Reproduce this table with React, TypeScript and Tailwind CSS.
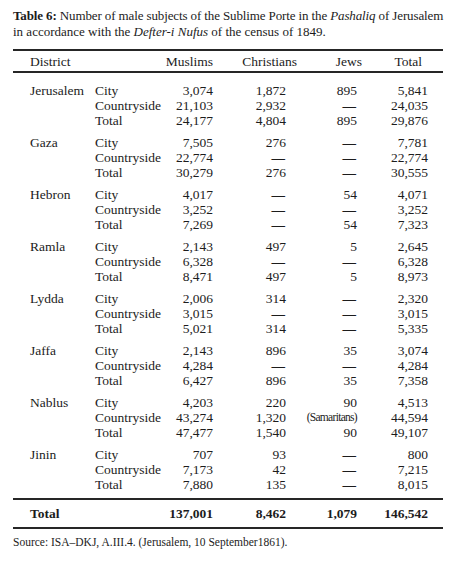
const groups = [
  {
    district: 'Jerusalem',
    rows: [
      ['City', '3,074', '1,872', '895', '5,841'],
      ['Countryside', '21,103', '2,932', '—', '24,035'],
      ['Total', '24,177', '4,804', '895', '29,876'],
    ],
  },
  {
    district: 'Gaza',
    rows: [
      ['City', '7,505', '276', '—', '7,781'],
      ['Countryside', '22,774', '—', '—', '22,774'],
      ['Total', '30,279', '276', '—', '30,555'],
    ],
  },
  {
    district: 'Hebron',
    rows: [
      ['City', '4,017', '—', '54', '4,071'],
      ['Countryside', '3,252', '—', '—', '3,252'],
      ['Total', '7,269', '—', '54', '7,323'],
    ],
  },
  {
    district: 'Ramla',
    rows: [
      ['City', '2,143', '497', '5', '2,645'],
      ['Countryside', '6,328', '—', '—', '6,328'],
      ['Total', '8,471', '497', '5', '8,973'],
    ],
  },
  {
    district: 'Lydda',
    rows: [
      ['City', '2,006', '314', '—', '2,320'],
      ['Countryside', '3,015', '—', '—', '3,015'],
      ['Total', '5,021', '314', '—', '5,335'],
    ],
  },
  {
    district: 'Jaffa',
    rows: [
      ['City', '2,143', '896', '35', '3,074'],
      ['Countryside', '4,284', '—', '—', '4,284'],
      ['Total', '6,427', '896', '35', '7,358'],
    ],
  },
  {
    district: 'Nablus',
    rows: [
      ['City', '4,203', '220', '90', '4,513'],
      ['Countryside', '43,274', '1,320', '(Samaritans)', '44,594'],
      ['Total', '47,477', '1,540', '90', '49,107'],
    ],
  },
  {
    district: 'Jinin',
    rows: [
      ['City', '707', '93', '—', '800'],
      ['Countryside', '7,173', '42', '—', '7,215'],
      ['Total', '7,880', '135', '—', '8,015'],
    ],
  },
];

// district | kind | Muslims | Christians | Jews | Total
const cols = 'grid grid-cols-[65px_55px_63px_73px_71px_71px] pl-[17px]';

function Rule() {
  return <div className="h-[2px] bg-[#262626]" />;
}

function Cell({ v }: { v: string }) {
  if (v === '—') return <div className="text-right font-bold pr-[1px]">—</div>;
  if (v.startsWith('('))
    return <div className="text-right whitespace-nowrap text-[11.5px] tracking-[-0.7px]">{v}</div>;
  return <div className="text-right">{v}</div>;
}

export default function App() {
  return (
    <div className="w-[471px] h-[566px] bg-white text-[#1c1c1c] font-['Liberation_Serif',serif] px-[13px] pt-2">
      {/* Caption */}
      <p className="w-[430px] text-[13px] leading-4">
        <span className="whitespace-nowrap tracking-[-0.12px]">
          <span className="font-bold">Table 6:</span> Number of male subjects of the Sublime Porte in the{' '}
          <i>Pashaliq</i> of Jerusalem
        </span>
        <br />
        in accordance with the <i>Defter-i Nufus</i> of the census of 1849.
      </p>

      <div className="w-[430px] mt-[9px] text-[13.5px] leading-[15px]">
        <Rule />
        <div className={`${cols} h-5 items-center`}>
          <div className="col-span-2">District</div>
          <div className="text-right">Muslims</div>
          <div className="text-right -mr-[11px]">Christians</div>
          <div className="text-right -mr-[5px]">Jews</div>
          <div className="text-right mr-[6px]">Total</div>
        </div>
        <Rule />

        {/* Districts */}
        <div className="flex flex-col gap-[7px] pt-[10px] pb-[6px]">
          {groups.map((g) => (
            <div key={g.district} className={cols}>
              <div>{g.district}</div>
              <div className="col-span-5 flex flex-col">
                {g.rows.map((r) => (
                  <div key={r[0]} className="grid grid-cols-[55px_63px_73px_71px_71px] h-[15px]">
                    <div>{r[0]}</div>
                    <Cell v={r[1]} />
                    <Cell v={r[2]} />
                    <Cell v={r[3]} />
                    <Cell v={r[4]} />
                  </div>
                ))}
              </div>
            </div>
          ))}
        </div>

        <Rule />
        <div className={`${cols} h-[27px] items-center font-bold`}>
          <div className="col-span-2">Total</div>
          <div className="text-right">137,001</div>
          <div className="text-right">8,462</div>
          <div className="text-right">1,079</div>
          <div className="text-right">146,542</div>
        </div>
        <Rule />
      </div>

      <p className="mt-[6px] text-[11.5px] leading-[15px]">
        Source: ISA–DKJ, A.III.4. (Jerusalem, 10 September1861).
      </p>
    </div>
  );
}
